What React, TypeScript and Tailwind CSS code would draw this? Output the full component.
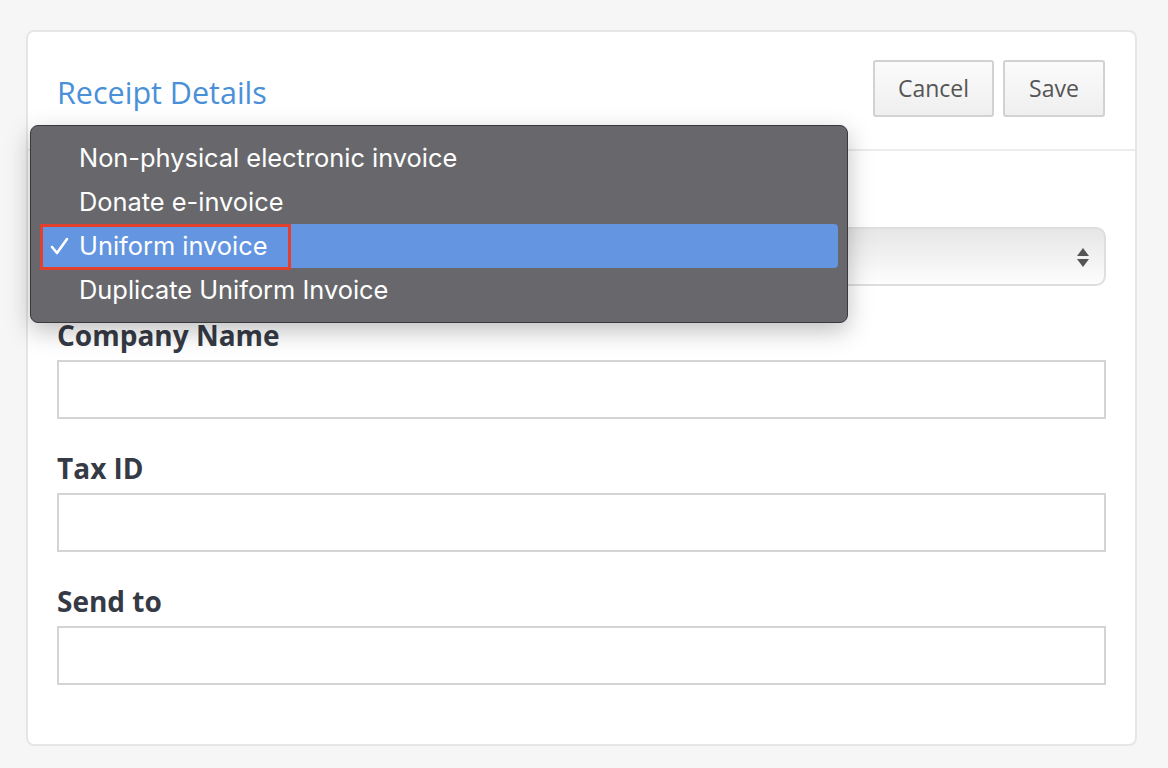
import React from "react";

const OPTIONS = [
  "Non-physical electronic invoice",
  "Donate e-invoice",
  "Uniform invoice",
  "Duplicate Uniform Invoice",
];

const FIELDS = ["Company Name", "Tax ID", "Send to"];

export default function App() {
  return (
    <div
      className="min-h-[768px] w-[1168px] bg-[#f6f6f6] pt-[30px] pl-[26px]"
      style={{ fontFamily: '"Open Sans", "Liberation Sans", sans-serif' }}
    >
      <div className="relative w-[1111px] h-[716px] rounded-[8px] border-2 border-[#e6e6e6] bg-white">
        {/* header */}
        <div className="flex h-[119px] items-center justify-between border-b-2 border-[#ececec] pl-[29px] pr-[30px]">
          <h2 className="mt-[4px] text-[30.5px] leading-none text-[#4a90d9]">Receipt Details</h2>
          <div className="-mt-[4px] flex gap-[9px]">
            <button className="h-[57px] w-[121px] rounded-[3px] border-2 border-[#d2d2d2] bg-gradient-to-b from-[#fbfbfb] to-[#efefef] text-[23px] text-[#555]">
              Cancel
            </button>
            <button className="h-[57px] w-[102px] rounded-[3px] border-2 border-[#d2d2d2] bg-gradient-to-b from-[#fbfbfb] to-[#efefef] text-[23px] text-[#555]">
              Save
            </button>
          </div>
        </div>

        {/* body */}
        <div className="flex flex-col gap-[32px] px-[29px] pt-[34px]">
          <div className="flex flex-col gap-[8px]">
            {/* label of the select sits under the open popup */}
            <div className="h-[34px]" />
            <div className="flex h-[59px] items-center justify-end rounded-[10px] border-2 border-[#dedede] bg-gradient-to-b from-[#e6e6e6] to-[#fdfdfd] pr-[14px]">
              <svg width="14" height="24" viewBox="0 0 14 24">
                <path d="M7 3 L13 11 L1 11 Z" fill="#555" />
                <path d="M1 14 L13 14 L7 22 Z" fill="#555" />
              </svg>
            </div>
          </div>
          {FIELDS.map((f) => (
            <div key={f} className="flex flex-col gap-[8px]">
              <label className="h-[34px] text-[28px] font-bold leading-[34px] text-[#353a45]">{f}</label>
              <div className="h-[59px] border-2 border-[#d4d4d4] bg-white" />
            </div>
          ))}
        </div>

        {/* native select popup */}
        <div
          className="absolute left-[2px] top-[93px] w-[818px] rounded-[8px] border border-[#3a3a3c] bg-[#68686c] px-[9px] pt-[10px] pb-[10px] shadow-[0_8px_24px_rgba(0,0,0,0.25)]"
          style={{ fontFamily: 'Inter, "Liberation Sans", sans-serif' }}
        >
          {OPTIONS.map((o) => {
            const sel = o === "Uniform invoice";
            return (
              <div
                key={o}
                className={`relative flex h-[44px] items-center rounded-[4px] pl-[39px] text-[25.4px] text-white ${sel ? "bg-[#6495e0]" : ""}`}
              >
                {sel && (
                  <>
                    <svg className="absolute left-[10px] top-[13px]" width="19" height="18" viewBox="0 0 19 18">
                      <path d="M2 10 L7 16 L17 2" fill="none" stroke="white" strokeWidth="2.6" strokeLinecap="round" strokeLinejoin="round" />
                    </svg>
                    <span className="absolute left-0 top-0 h-[46px] w-[251px] border-[3px] border-[#e0402c]" />
                  </>
                )}
                {o}
              </div>
            );
          })}
        </div>
      </div>
    </div>
  );
}
